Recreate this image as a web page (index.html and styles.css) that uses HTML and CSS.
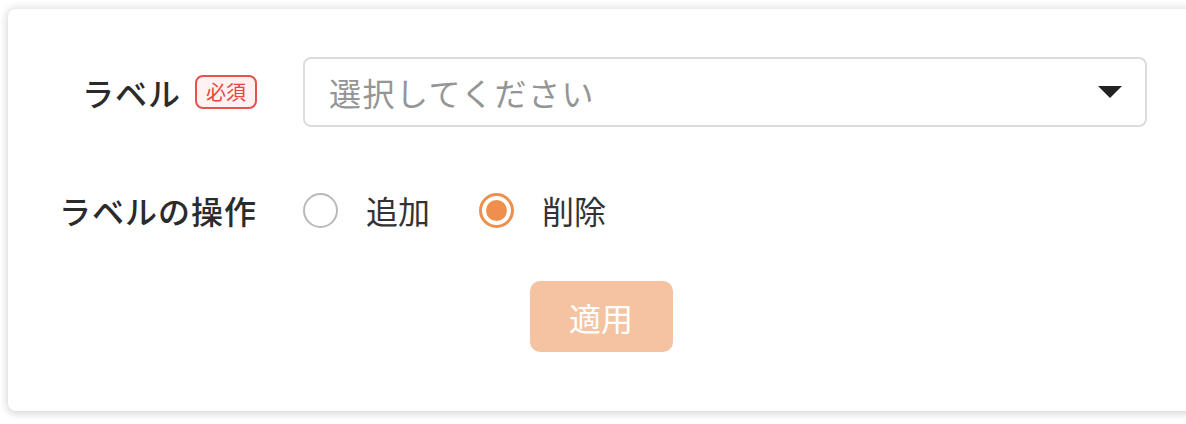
FILE: index.html
```html
<!DOCTYPE html>
<html lang="ja">
<head>
<meta charset="utf-8">
<link rel="stylesheet" href="styles.css">
</head>
<body>
<div class="card">
  <div class="form">
    <div class="row">
      <div class="label">ラベル<span class="badge">必須</span></div>
      <div class="select">
        <span class="placeholder">選択してください</span>
        <svg class="caret" width="24" height="12" viewBox="0 0 24 12"><path d="M0 0H24L12 12Z" fill="#222"/></svg>
      </div>
    </div>
    <div class="row row-radio">
      <div class="label">ラベルの操作</div>
      <div class="radios">
        <label class="radio"><span class="dot"></span><span class="rtext">追加</span></label>
        <label class="radio checked"><span class="dot"></span><span class="rtext">削除</span></label>
      </div>
    </div>
  </div>
  <div class="actions">
    <button class="apply" disabled>適用</button>
  </div>
</div>
</body>
</html>
```
FILE: styles.css
```css
html, body {
  margin: 0;
  padding: 0;
  background: #ffffff;
  overflow: hidden;
  width: 1186px;
  height: 424px;
}
body {
  font-family: "Noto Sans CJK JP", "Noto Sans", sans-serif;
  color: #333;
  padding: 9px 0 0 8px;
  box-sizing: border-box;
}
.card {
  width: 1186px;
  height: 402px;
  box-sizing: border-box;
  background: #fff;
  border-radius: 8px;
  box-shadow: 0 0 6px 3px rgba(0, 0, 0, 0.09), 0 4px 8px rgba(0, 0, 0, 0.06);
  padding: 48px 47px 0 47px;
}
.form {
  display: grid;
  grid-template-columns: 202px 1fr;
  row-gap: 48px;
  column-gap: 46px;
}
.row {
  display: contents;
}
.label {
  display: flex;
  align-items: center;
  justify-content: flex-end;
  font-size: 32px;
  letter-spacing: 1px;
  font-weight: 500;
  color: #2b2b2b;
  white-space: nowrap;
}
.badge {
  display: inline-flex;
  align-items: center;
  justify-content: center;
  margin-left: 14px;
  width: 62px;
  height: 34px;
  box-sizing: border-box;
  border: 2px solid #e8524d;
  border-radius: 8px;
  background: #fff2f1;
  color: #e8453f;
  font-size: 20px;
  letter-spacing: 0;
  font-weight: 400;
  line-height: 1;
}
.select {
  height: 70px;
  box-sizing: border-box;
  border: 2px solid #dcdcdc;
  border-radius: 8px;
  display: flex;
  align-items: center;
  justify-content: space-between;
  padding: 0 23px 0 24px;
}
.placeholder {
  font-size: 32px;
  letter-spacing: 1.5px;
  color: #959595;
}
.radios {
  display: flex;
  align-items: center;
  height: 70px;
  gap: 49px;
}
.radio {
  display: flex;
  align-items: center;
}
.dot {
  width: 35px;
  height: 35px;
  box-sizing: border-box;
  border: 2px solid #b9b9b9;
  border-radius: 50%;
  display: flex;
  align-items: center;
  justify-content: center;
}
.radio.checked .dot {
  border: 3px solid #f08f4b;
}
.radio.checked .dot::after {
  content: "";
  width: 21px;
  height: 21px;
  border-radius: 50%;
  background: #f08f4b;
}
.rtext {
  margin-left: 28px;
  font-size: 32px;
  color: #333;
}
.actions {
  display: flex;
  justify-content: center;
  margin-top: 36px;
}
.apply {
  width: 143px;
  height: 71px;
  border: none;
  border-radius: 10px;
  background: #f5c3a2;
  color: #fff;
  font-family: inherit;
  font-size: 32px;
  font-weight: 400;
  padding: 0;
}
```
